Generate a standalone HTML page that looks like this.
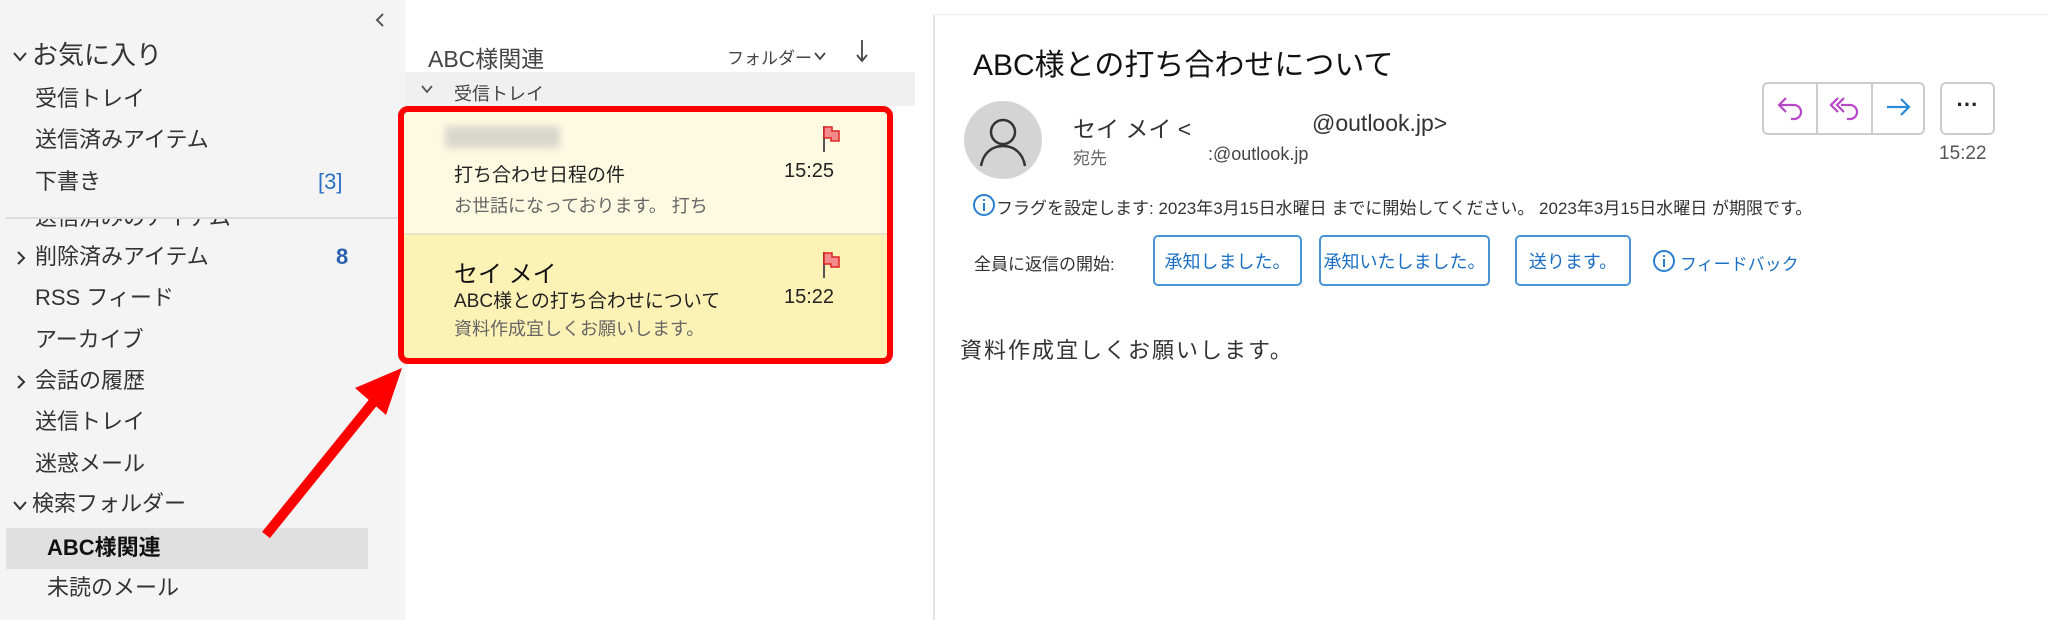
<!DOCTYPE html>
<html><head><meta charset="utf-8">
<style>
*{margin:0;padding:0;box-sizing:border-box}
body{width:2048px;height:620px;overflow:hidden;background:#fff;font-family:"Liberation Sans","Noto Sans CJK JP",sans-serif;color:#222;position:relative}
.a{position:absolute;white-space:nowrap}
.side{position:absolute;left:0;top:0;width:405px;height:620px;background:#f4f4f4}
.mid{position:absolute;left:405px;top:0;width:528px;height:620px;background:#fff}
.nav{font-size:22px;color:#333;line-height:1}
.btn{position:absolute;top:235px;height:51px;border:2px solid #4a94d6;border-radius:5px;color:#1a6fc4;font-size:18px;display:flex;align-items:center;justify-content:center;background:#fff}
</style></head><body>
<div class="side"></div>
<svg class="a" style="left:374px;top:12px" width="12" height="16"><path d="M9 2L3 8l6 6" fill="none" stroke="#555" stroke-width="2"/></svg>
<svg class="a" style="left:12px;top:50px" width="16" height="14"><path d="M2 3l6 7 6-7" fill="none" stroke="#333" stroke-width="2"/></svg>
<div class="a nav" style="left:32px;top:42px;font-size:26px">お気に入り</div>
<div class="a nav" style="left:35px;top:88px">受信トレイ</div>
<div class="a nav" style="left:35px;top:129px">送信済みアイテム</div>
<div class="a nav" style="left:35px;top:171px">下書き</div>
<div class="a nav" style="left:318px;top:171px;color:#2b72c2">[3]</div>
<div style="position:absolute;left:0;top:219px;width:405px;height:10px;overflow:hidden"><div class="a nav" style="left:35px;top:-12px">送信済みのアイテム</div></div>
<div style="position:absolute;left:6px;top:217px;width:392px;height:2px;background:#ddd"></div>
<svg class="a" style="left:15px;top:250px" width="12" height="16"><path d="M3 2l6 6-6 6" fill="none" stroke="#333" stroke-width="2"/></svg>
<div class="a nav" style="left:35px;top:246px">削除済みアイテム</div>
<div class="a nav" style="left:336px;top:246px;color:#2b62b0;font-weight:bold">8</div>
<div class="a nav" style="left:35px;top:287px">RSS フィード</div>
<div class="a nav" style="left:35px;top:329px">アーカイブ</div>
<svg class="a" style="left:15px;top:374px" width="12" height="16"><path d="M3 2l6 6-6 6" fill="none" stroke="#333" stroke-width="2"/></svg>
<div class="a nav" style="left:35px;top:370px">会話の履歴</div>
<div class="a nav" style="left:35px;top:411px">送信トレイ</div>
<div class="a nav" style="left:35px;top:453px">迷惑メール</div>
<svg class="a" style="left:12px;top:499px" width="16" height="14"><path d="M2 3l6 7 6-7" fill="none" stroke="#333" stroke-width="2"/></svg>
<div class="a nav" style="left:32px;top:493px">検索フォルダー</div>
<div style="position:absolute;left:6px;top:528px;width:362px;height:41px;background:#e0e0e0"></div>
<div class="a nav" style="left:47px;top:537px;font-weight:bold;color:#111">ABC様関連</div>
<div class="a nav" style="left:47px;top:577px">未読のメール</div>

<div class="mid"></div>
<div class="a" style="left:428px;top:40px;font-size:23px;color:#444">ABC様関連</div>
<div class="a" style="left:727px;top:44px;font-size:17px;color:#444">フォルダー</div>
<svg class="a" style="left:813px;top:50px" width="14" height="12"><path d="M2 3l5 6 5-6" fill="none" stroke="#444" stroke-width="1.8"/></svg>
<svg class="a" style="left:855px;top:38px" width="14" height="26"><path d="M7 2v21M2 17l5 6 5-6" fill="none" stroke="#444" stroke-width="1.8"/></svg>
<div style="position:absolute;left:405px;top:72px;width:510px;height:34px;background:#f0f0f0"></div>
<svg class="a" style="left:420px;top:83px" width="14" height="12"><path d="M2 3l5 6 5-6" fill="none" stroke="#555" stroke-width="1.8"/></svg>
<div class="a" style="left:454px;top:80px;font-size:18px;color:#444">受信トレイ</div>

<div style="position:absolute;left:398px;top:106px;width:495px;height:258px;border:6px solid #f00;border-radius:10px;background:#fdf2b6;overflow:hidden">
 <div style="position:absolute;left:0;top:0;width:483px;height:123px;background:#fefae2;border-bottom:2px solid #e8e2c8"></div>
</div>
<div class="a" style="left:445px;top:126px;width:115px;height:22px;background:#d8d6cc;filter:blur(4px)"></div>
<div class="a" style="left:454px;top:160px;font-size:19px;color:#222">打ち合わせ日程の件</div>
<div class="a" style="left:784px;top:160px;font-size:20px;color:#222">15:25</div>
<div class="a" style="left:454px;top:192px;font-size:18px;color:#666">お世話になっております。 打ち</div>
<div class="a" style="left:454px;top:254px;font-size:24px;color:#111">セイ メイ</div>
<div class="a" style="left:454px;top:286px;font-size:19px;color:#222">ABC様との打ち合わせについて</div>
<div class="a" style="left:784px;top:286px;font-size:20px;color:#222">15:22</div>
<div class="a" style="left:454px;top:315px;font-size:18px;color:#666">資料作成宜しくお願いします。</div>
<svg class="a" style="left:820px;top:124px" width="26" height="30"><line x1="4" y1="2" x2="4" y2="28" stroke="#555" stroke-width="2"/><path d="M4 3h8v4h7v10h-8v-3h-7z" fill="#f58a8a" stroke="#d22" stroke-width="1.5"/></svg>
<svg class="a" style="left:820px;top:250px" width="26" height="30"><line x1="4" y1="2" x2="4" y2="28" stroke="#555" stroke-width="2"/><path d="M4 3h8v4h7v10h-8v-3h-7z" fill="#f58a8a" stroke="#d22" stroke-width="1.5"/></svg>

<svg class="a" style="left:0;top:0" width="2048" height="620"><line x1="266" y1="535" x2="375" y2="400" stroke="#f00" stroke-width="10"/><polygon points="402,368 355,388 386,415" fill="#f00"/></svg>

<div style="position:absolute;left:933px;top:14px;width:2px;height:606px;background:#e4e4e4"></div>
<div style="position:absolute;left:933px;top:14px;width:1115px;height:1px;background:#eee"></div>
<div class="a" style="left:973px;top:40px;font-size:30px;color:#111">ABC様との打ち合わせについて</div>
<svg class="a" style="left:964px;top:100px" width="80" height="80"><circle cx="39" cy="40" r="39" fill="#d4d4d4"/><circle cx="39" cy="32" r="12" fill="none" stroke="#333" stroke-width="2.5"/><path d="M17 66c2-12 10-20 22-20s20 8 22 20" fill="none" stroke="#333" stroke-width="2.5"/></svg>
<div class="a" style="left:1073px;top:110px;font-size:23px;color:#333">セイ メイ &lt;</div>
<div class="a" style="left:1312px;top:110px;font-size:23px;color:#333">@outlook.jp&gt;</div>
<div class="a" style="left:1073px;top:144px;font-size:17px;color:#666">宛先</div>
<div class="a" style="left:1208px;top:144px;font-size:18px;color:#444">:@outlook.jp</div>
<div style="position:absolute;left:1762px;top:82px;width:163px;height:53px;border:2px solid #ccc;border-radius:6px"></div>
<div style="position:absolute;left:1816px;top:82px;width:2px;height:53px;background:#ccc"></div>
<div style="position:absolute;left:1871px;top:82px;width:2px;height:53px;background:#ccc"></div>
<div style="position:absolute;left:1940px;top:82px;width:55px;height:53px;border:2px solid #ccc;border-radius:6px;text-align:center;font-size:22px;line-height:42px;font-weight:bold">···</div>
<svg class="a" style="left:1775px;top:94px" width="32" height="30"><path d="M5 11h14a7 7 0 0 1 0 14h-3M11 4l-7 7 7 7" fill="none" stroke="#b548c6" stroke-width="2.2"/></svg>
<svg class="a" style="left:1829px;top:94px" width="32" height="30"><path d="M12 11h9a7 7 0 0 1 0 14h-3M15 4l-7 7 7 7M9 4l-7 7 7 7" fill="none" stroke="#b548c6" stroke-width="2.2"/></svg>
<svg class="a" style="left:1883px;top:94px" width="32" height="30"><path d="M4 13h22M18 5l8 8-8 8" fill="none" stroke="#2a8ad8" stroke-width="2.2"/></svg>
<div class="a" style="left:1939px;top:143px;font-size:19px;color:#555">15:22</div>
<svg class="a" style="left:972px;top:193px" width="24" height="24"><circle cx="12" cy="12" r="10" fill="none" stroke="#2a7fd0" stroke-width="2"/><rect x="11" y="10" width="2" height="8" fill="#2a7fd0"/><rect x="11" y="6" width="2" height="2" fill="#2a7fd0"/></svg>
<div class="a" style="left:996px;top:194px;font-size:17px;color:#333">フラグを設定します:  2023年3月15日水曜日 までに開始してください。 2023年3月15日水曜日 が期限です。</div>
<div class="a" style="left:974px;top:250px;font-size:17px;color:#333">全員に返信の開始:</div>
<div class="btn" style="left:1153px;width:149px">承知しました。</div>
<div class="btn" style="left:1319px;width:171px">承知いたしました。</div>
<div class="btn" style="left:1515px;width:116px">送ります。</div>
<svg class="a" style="left:1652px;top:249px" width="24" height="24"><circle cx="12" cy="12" r="10" fill="none" stroke="#2a7fd0" stroke-width="2"/><rect x="11" y="10" width="2" height="8" fill="#2a7fd0"/><rect x="11" y="6" width="2" height="2" fill="#2a7fd0"/></svg>
<div class="a" style="left:1680px;top:250px;font-size:17px;color:#1a6fc4">フィードバック</div>
<div class="a" style="left:960px;top:333px;font-size:22px;color:#333;letter-spacing:2px">資料作成宜しくお願いします。</div>
</body></html>
